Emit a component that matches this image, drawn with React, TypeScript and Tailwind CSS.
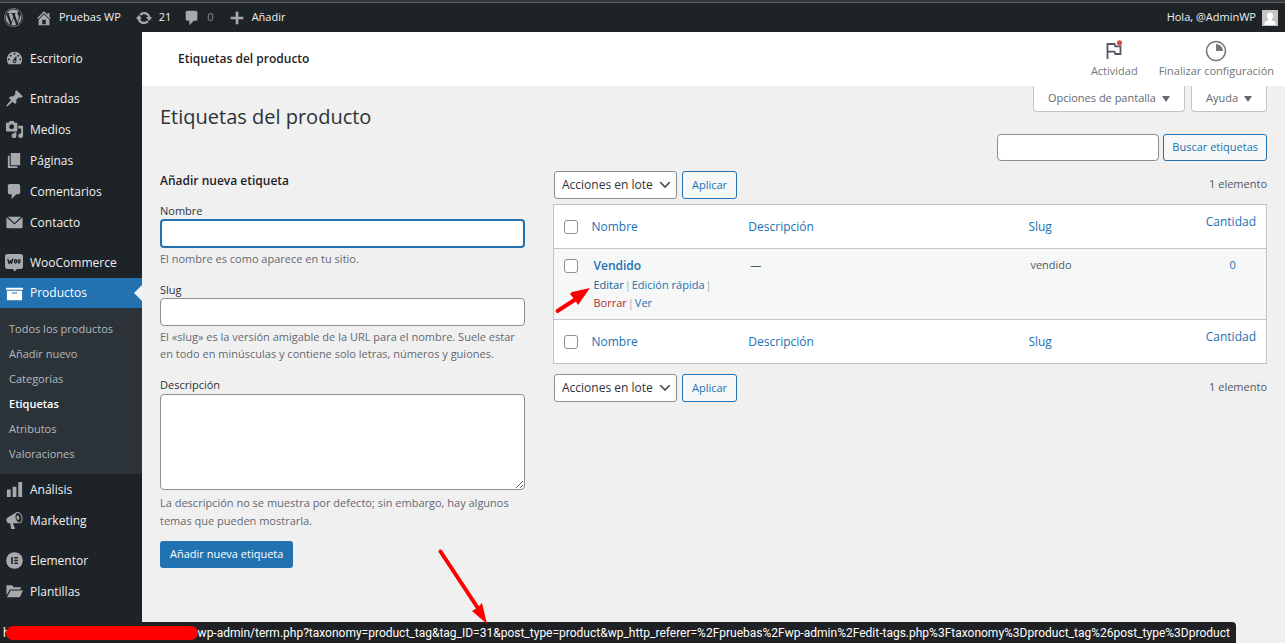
import type { ReactNode } from "react";
import { FaWordpress } from "react-icons/fa";

const ICONS = {
  dashboard:
    "M3.76 16h12.48c1.1-1.37 1.76-3.11 1.76-5 0-4.42-3.58-8-8-8s-8 3.58-8 8c0 1.89.66 3.63 1.76 5zM10 4c.55 0 1 .45 1 1s-.45 1-1 1-1-.45-1-1 .45-1 1-1zM6 6c.55 0 1 .45 1 1s-.45 1-1 1-1-.45-1-1 .45-1 1-1zm8 0c.55 0 1 .45 1 1s-.45 1-1 1-1-.45-1-1 .45-1 1-1zm-5.37 5.55L12 7v6c0 1.1-.9 2-2 2s-2-.9-2-2c0-.57.24-1.08.63-1.45zM4 10c.55 0 1 .45 1 1s-.45 1-1 1-1-.45-1-1 .45-1 1-1zm12 0c.55 0 1 .45 1 1s-.45 1-1 1-1-.45-1-1 .45-1 1-1zm-5 3c0-.55-.45-1-1-1s-1 .45-1 1 .45 1 1 1 1-.45 1-1z",
  pin: "M10.44 3.02l1.82-1.82 6.36 6.35-1.83 1.82c-1.05-.68-2.48-.57-3.41.36l-.75.75c-.92.93-1.04 2.35-.35 3.41l-1.83 1.82-2.41-2.41-2.8 2.79c-.42.42-3.38 2.71-3.8 2.29s1.86-3.39 2.28-3.81l2.79-2.79L4.1 9.36l1.83-1.82c1.05.69 2.48.57 3.4-.36l.75-.75c.93-.92 1.05-2.35.36-3.41z",
  media:
    "M13 11V4c0-.55-.45-1-1-1h-1.67L9 1H5L3.67 3H2c-.55 0-1 .45-1 1v7c0 .55.45 1 1 1h10c.55 0 1-.45 1-1zM7 4.5c1.38 0 2.5 1.12 2.5 2.5S8.38 9.5 7 9.5 4.5 8.38 4.5 7 5.62 4.5 7 4.5zM14 6h5v10.5c0 1.38-1.12 2.5-2.5 2.5S14 17.88 14 16.5s1.12-2.5 2.5-2.5c.17 0 .34.02.5.05V9h-3V6zm-4 8.05V13h2v3.5c0 1.38-1.12 2.5-2.5 2.5S7 17.88 7 16.5 8.12 14 9.5 14c.17 0 .34.02.5.05z",
  page: "M6 15V2h10v13H6zm-1 1h8v2H3V5h2v11z",
  comment:
    "M5 2h9c1.1 0 2 .9 2 2v7c0 1.1-.9 2-2 2h-2l-5 5v-5H5c-1.1 0-2-.9-2-2V4c0-1.1.9-2 2-2z",
  mail: "M3 4L10 10.500 17 4zM1.500 4.600V15c0 .6.500 1 1 1h15c.6 0 1-.4 1-1V4.600L10 12.200z",
  archive: "M19 4v2H1V4h18zM2 7h16v10H2V7zm11 3V9H7v1h6z",
  chart: "M18 18V2h-4v16h4zm-6 0V7H8v11h4zm-6 0v-8H2v8h4z",
  megaphone:
    "M18.15 5.94c.46 1.62.38 3.22-.02 4.48-.42 1.28-1.26 2.18-2.3 2.48-.16.06-.26.06-.4.06-.06.02-.12.02-.18.02-.06.02-.14.02-.22.02h-6.8l2.22 5.5c.02.14-.06.26-.14.34-.08.1-.24.16-.34.16H6.95c-.1 0-.26-.06-.34-.16-.08-.08-.16-.2-.14-.34l-1-5.5H4.25l-.02-.02c-.5.06-1.08-.18-1.54-.62s-.88-1.08-1.06-1.88c-.24-.8-.2-1.56-.02-2.2.18-.62.58-1.08 1.06-1.3l.02-.02 9-5.4c.1-.06.18-.1.24-.16.06-.04.14-.08.24-.12.16-.08.28-.12.5-.18 1.04-.3 2.24.1 3.22.98s1.84 2.24 2.26 3.86zm-2.58 5.98h-.02c.4-.1.74-.34 1.04-.7.58-.7.86-1.76.86-3.04 0-.64-.1-1.3-.28-1.98-.34-1.36-1.02-2.5-1.78-3.24s-1.68-1.1-2.46-.88c-.82.22-1.4.96-1.7 2-.32 1.04-.28 2.36.06 3.72.38 1.36 1 2.5 1.8 3.24.78.74 1.62 1.1 2.48.88zm-2.54-7.08c.22-.04.42-.02.62.04.38.16.76.48 1.02 1s.42 1.2.42 1.78c0 .3-.04.56-.12.8-.18.48-.44.84-.86.94-.34.1-.8-.06-1.14-.4s-.64-.86-.78-1.5c-.18-.62-.12-1.24.02-1.72s.48-.84.82-.94z",
  elementor:
    "M10 1.200a8.800 8.800 0 1 0 0 17.600 8.800 8.800 0 0 0 0-17.600zM6.500 6.400h1.700v7.200H6.500V6.400zm3.200 0h3.900V8H9.700V6.400zm0 2.800h3.900v1.600H9.700V9.200zm0 2.800h3.900v1.600H9.700V12z",
  folder:
    "M1.500 3.500h6l1.500 2h7.500V8H5.200L1.500 14v-10.500zM6 9h13l-3.500 7H2L6 9z",
  update:
    "M10.2 3.28c3.53 0 6.43 2.61 6.92 6h2.08l-3.5 4-3.5-4h2.32c-.45-1.97-2.21-3.45-4.32-3.45-1.45 0-2.73.71-3.54 1.78L4.95 5.66C6.23 4.2 8.11 3.28 10.2 3.28zm-.4 13.44c-3.52 0-6.43-2.61-6.92-6H.8l3.5-4c1.17 1.33 2.33 2.67 3.5 4H5.48c.45 1.97 2.21 3.45 4.32 3.45 1.45 0 2.73-.71 3.54-1.78l1.71 1.95c-1.28 1.46-3.15 2.38-5.25 2.38z",
  plus: "M17 8.500v3h-5.500V17h-3v-5.500H3v-3h5.500V3h3v5.500z",
  home: "M16 8.5l1.53 1.53-1.06 1.06L10 4.6l-6.47 6.49-1.06-1.06L10 2.5l4 4v-2h2v4zm-6-2.46l6 5.99V18H4v-5.97zM12 17v-5H8v5h4z",
};

type IconName = keyof typeof ICONS;

function Icon({ name, className }: { name: IconName; className: string }) {
  return (
    <svg viewBox="0 0 20 20" fill="currentColor" fillRule="evenodd" className={className} aria-hidden="true">
      <path d={ICONS[name]} />
    </svg>
  );
}

function WooIcon() {
  return (
    <svg viewBox="0 0 20 20" className="size-5 shrink-0 text-[#a7aaad]" aria-hidden="true">
      <path d="M3.500 1h13A2.500 2.500 0 0 1 19 3.500v10a2.500 2.500 0 0 1-2.500 2.500H13l-2.500 2.500L9 16H3.500A2.500 2.500 0 0 1 1 13.500v-10A2.500 2.500 0 0 1 3.500 1z" fill="currentColor" />
      <g fill="none" stroke="#1d2327" strokeWidth="1.300" strokeLinejoin="round" strokeLinecap="round">
        <path d="M4 6.500l1 4 1.600-3 .9 3L8.800 6" />
        <ellipse cx="11.500" cy="8.300" rx="1" ry="1.700" />
        <ellipse cx="15" cy="8.300" rx="1" ry="1.700" />
      </g>
    </svg>
  );
}

function MenuItem({ icon, label }: { icon: IconName; label: string }) {
  return (
    <li>
      <a href="#" className="flex h-[31px] items-center gap-1.5 pl-1 text-[12px] text-[#f0f0f1]">
        <span className="flex w-5 justify-center text-[#a7aaad]">
          <Icon name={icon} className="size-[19px]" />
        </span>
        {label}
      </a>
    </li>
  );
}

const SUBMENU = ["Todos los productos", "Añadir nuevo", "Categorías", "Etiquetas", "Atributos", "Valoraciones"];

function Sidebar() {
  return (
    <nav className="w-[142px] shrink-0 bg-[#1d2327] pt-[11px]">
      <ul>
        <MenuItem icon="dashboard" label="Escritorio" />
      </ul>
      <ul className="mt-[9px]">
        <MenuItem icon="pin" label="Entradas" />
        <MenuItem icon="media" label="Medios" />
        <MenuItem icon="page" label="Páginas" />
        <MenuItem icon="comment" label="Comentarios" />
        <MenuItem icon="mail" label="Contacto" />
      </ul>
      <ul className="mt-[9px]">
        <li>
          <a href="#" className="flex h-[31px] items-center gap-1.5 pl-1 text-[12px] text-[#f0f0f1]">
            <WooIcon />
            WooCommerce
          </a>
        </li>
        <li>
          <a href="#" className="relative flex h-[30px] items-center gap-1.5 bg-[#2271b1] pl-1 text-[12px] text-white">
            <span className="flex w-5 justify-center">
              <Icon name="archive" className="size-[19px]" />
            </span>
            Productos
            <span className="absolute right-0 top-[7px] border-y-8 border-r-8 border-y-transparent border-r-[#f0f0f1]" />
          </a>
          <ul className="bg-[#2c3338] pb-[7px] pt-[9px]">
            {SUBMENU.map((label) => (
              <li key={label}>
                <a
                  href="#"
                  className={`flex h-[25px] items-center pl-[9px] text-[11px] ${
                    label === "Etiquetas" ? "font-semibold text-white" : "text-[#b4b9be]"
                  }`}
                >
                  {label}
                </a>
              </li>
            ))}
          </ul>
        </li>
        <MenuItem icon="chart" label="Análisis" />
        <MenuItem icon="megaphone" label="Marketing" />
      </ul>
      <ul className="mt-[9px]">
        <MenuItem icon="elementor" label="Elementor" />
        <MenuItem icon="folder" label="Plantillas" />
      </ul>
    </nav>
  );
}

function AdminBar() {
  return (
    <div className="border-t-2 border-[#35363a]">
      <header className="flex h-[30px] items-center border-t border-[#5f6368] bg-[#1d2327] pl-1 pr-[7px] text-[11px] text-[#f0f0f1]">
        <a href="#" aria-label="Acerca de WordPress" className="text-[#a7aaad]">
          <FaWordpress className="size-[19px]" />
        </a>
        <a href="#" className="ml-3 flex items-center gap-1.5">
          <Icon name="home" className="size-[18px] text-[#a7aaad]" />
          Pruebas WP
        </a>
        <a href="#" className="ml-3.5 flex items-center gap-1.5">
          <Icon name="update" className="size-[18px] text-[#a7aaad]" />
          21
        </a>
        <a href="#" className="ml-3 flex items-center gap-1.5 text-[#8c8f94]">
          <Icon name="comment" className="size-[18px] text-[#a7aaad]" />
          0
        </a>
        <a href="#" className="ml-3.5 flex items-center gap-1.5">
          <Icon name="plus" className="size-[18px] text-[#a7aaad]" />
          Añadir
        </a>
        <a href="#" className="ml-auto flex items-center gap-1.5">
          Hola, @AdminWP
          <svg viewBox="0 0 16 16" className="size-4" aria-hidden="true">
            <rect width="16" height="16" fill="#c5c5c5" />
            <path d="M8 2.500c2 0 3 1.500 3 3.500 0 1.500-.6 2.800-1.500 3.400v.8c2 .5 4 1.300 4 3.300V15h-11v-1.500c0-2 2-2.800 4-3.300v-.8C5.600 8.800 5 7.500 5 6c0-2 1-3.500 3-3.500z" fill="#fff" />
          </svg>
        </a>
      </header>
    </div>
  );
}

function WooHeader() {
  return (
    <div className="flex h-[54px] items-center bg-white pl-9 pr-[11px]">
      <h2 className="text-[12px] font-semibold text-[#1e1e1e]">Etiquetas del producto</h2>
      <div className="ml-auto flex gap-[21px] text-[11px] leading-4 text-[#757575]">
        <button type="button" className="flex flex-col items-center">
          <svg viewBox="0 0 24 24" className="size-6" aria-hidden="true">
            <path d="M5.500 20V5h7l.8 2.300h5.200v7.700h-5.200l-.8-2.300H5.500" fill="none" stroke="#50575e" strokeWidth="1.800" />
            <circle cx="17.500" cy="3.800" r="2.600" fill="#e0484d" />
          </svg>
          Actividad
        </button>
        <button type="button" className="flex flex-col items-center">
          <svg viewBox="0 0 24 24" className="size-6" aria-hidden="true">
            <circle cx="12" cy="12" r="9.500" fill="none" stroke="#757575" strokeWidth="1.600" />
            <path d="M12 5a7 7 0 0 1 7 7h-7z" fill="#757575" />
          </svg>
          Finalizar configuración
        </button>
      </div>
    </div>
  );
}

function ScreenTab({ children }: { children: ReactNode }) {
  return (
    <button
      type="button"
      className="flex h-[26px] items-center gap-1.5 rounded-b border border-t-0 border-[#c3c4c7] bg-white px-3.5 text-[11px] text-[#646970]"
    >
      {children}
      <svg viewBox="0 0 8 6" className="h-1.5 w-2" aria-hidden="true">
        <path d="M0 0h8L4 6z" fill="#646970" />
      </svg>
    </button>
  );
}

function TagForm() {
  return (
    <form className="pr-7 text-[11px] text-[#2c3338]">
      <h2 className="text-[12px] font-semibold leading-5 text-[#1d2327]">Añadir nueva etiqueta</h2>
      <div className="mt-[11px]">
        <label htmlFor="tag-name" className="block leading-[17px]">
          Nombre
        </label>
        <input id="tag-name" className="block h-[29px] w-full rounded border-2 border-[#2271b1] bg-white px-2 outline-none" />
        <p className="mt-0.5 leading-[17px] text-[#646970]">El nombre es como aparece en tu sitio.</p>
      </div>
      <div className="mt-[14px]">
        <label htmlFor="tag-slug" className="block leading-[17px]">
          Slug
        </label>
        <input id="tag-slug" className="block h-7 w-full rounded border border-[#8c8f94] bg-white px-2" />
        <p className="mt-0.5 leading-[17px] text-[#646970]">
          El «slug» es la versión amigable de la URL para el nombre. Suele estar en todo en minúsculas y contiene
          solo letras, números y guiones.
        </p>
      </div>
      <div className="mt-[14px]">
        <label htmlFor="tag-description" className="block leading-[18px]">
          Descripción
        </label>
        <textarea id="tag-description" className="block h-24 w-full rounded border border-[#8c8f94] bg-white px-2" />
        <p className="mt-1 leading-[18px] text-[#646970]">
          La descripción no se muestra por defecto; sin embargo, hay algunos temas que pueden mostrarla.
        </p>
      </div>
      <button type="button" className="mt-[11px] h-[27px] rounded-[3px] bg-[#2271b1] px-2.5 font-medium text-white">
        Añadir nueva etiqueta
      </button>
    </form>
  );
}

function BulkActions() {
  return (
    <div className="flex items-start pl-px">
      <div className="relative">
        <select
          aria-label="Selecciona acción en lote"
          className="block h-7 w-[123px] appearance-none rounded-[3px] border border-[#8c8f94] bg-white pl-[7px] text-[12px] text-[#2c3338]"
        >
          <option>Acciones en lote</option>
        </select>
        <svg viewBox="0 0 20 20" className="pointer-events-none absolute right-1 top-1.5 size-4" aria-hidden="true">
          <path d="M5 6l5 5 5-5 2 1-7 7-7-7 2-1z" fill="#50575e" />
        </svg>
      </div>
      <button type="button" className="ml-[5px] h-7 rounded-[3px] border border-[#2271b1] bg-[#f6f7f7] px-[9px] text-[11px] text-[#2271b1]">
        Aplicar
      </button>
      <span className="ml-auto pt-1 text-[11px] leading-[18px] text-[#50575e]">1 elemento</span>
    </div>
  );
}

function HeadingRow({ edge }: { edge: string }) {
  return (
    <tr className={`h-11 bg-white text-left text-[12px] text-[#2271b1] ${edge}`}>
      <td className="pl-[10px]">
        <input type="checkbox" aria-label="Seleccionar todo" className="block size-3.5 appearance-none rounded-[3px] border border-[#8c8f94] bg-white" />
      </td>
      <th className="pl-2 font-normal"><a href="#">Nombre</a></th>
      <th className="pl-2 font-normal"><a href="#">Descripción</a></th>
      <th className="pl-2 font-normal"><a href="#">Slug</a></th>
      <th className="pr-2.5 pt-2 text-right align-top font-normal leading-[18px]"><a href="#">Cantidad</a></th>
    </tr>
  );
}

function Divider() {
  return <span className="px-px text-[#a7aaad]">|</span>;
}

function TagTable() {
  return (
    <table className="w-full table-fixed border-collapse border border-[#c3c4c7]">
      <colgroup>
        <col className="w-[30px]" />
        <col className="w-[22%]" />
        <col />
        <col className="w-[24%]" />
        <col className="w-[75px]" />
      </colgroup>
      <thead>
        <HeadingRow edge="border-b border-[#c3c4c7]" />
      </thead>
      <tbody>
        <tr className="h-[71px] bg-[#f6f7f7] align-top text-[11px] leading-[18px] text-[#50575e]">
          <td className="pl-[10px] pt-[10px]">
            <input type="checkbox" aria-label="Seleccionar Vendido" className="block size-3.5 appearance-none rounded-[3px] border border-[#8c8f94] bg-white" />
          </td>
          <td className="pl-[10px] pt-2">
            <a href="#" className="block text-[12px] font-semibold text-[#2271b1]">
              Vendido
            </a>
            <div className="pt-px">
              <a href="#" className="text-[#135e96]">Editar</a>
              <Divider />
              <a href="#" className="text-[#2271b1]">Edición rápida</a>
              <Divider />
              <br />
              <a href="#" className="text-[#b32d2e]">Borrar</a>
              <Divider />
              <a href="#" className="text-[#2271b1]">Ver</a>
            </div>
          </td>
          <td className="pl-[10px] pt-[7px]">—</td>
          <td className="pl-[10px] pt-[7px]">vendido</td>
          <td className="pl-2 pt-[7px] text-center">
            <a href="#" className="text-[#2271b1]">0</a>
          </td>
        </tr>
      </tbody>
      <tfoot>
        <HeadingRow edge="border-t border-[#c3c4c7]" />
      </tfoot>
    </table>
  );
}

function StatusBar() {
  return (
    <div className="absolute bottom-0 left-0 flex h-[21px] items-center rounded-tr bg-[#202124] pl-[3px] pr-1.5 font-[Roboto,sans-serif] text-[12px] text-white">
      <span>h</span>
      <span className="-ml-1 h-3.5 w-[192px] rounded-full bg-[#ff0000]" />
      <span className="whitespace-nowrap">
        wp-admin/term.php?taxonomy=product_tag&amp;tag_ID=31&amp;post_type=product&amp;wp_http_referer=%2Fpruebas%2Fwp-admin%2Fedit-tags.php%3Ftaxonomy%3Dproduct_tag%26post_type%3Dproduct
      </span>
    </div>
  );
}

export default function App() {
  return (
    <div className="relative flex min-h-screen flex-col overflow-hidden bg-[#f0f0f1] font-['Open_Sans',sans-serif]">
      <AdminBar />
      <div className="flex flex-1">
        <Sidebar />
        <div className="min-w-0 flex-1">
          <WooHeader />
          <main className="px-[18px]">
            <div className="flex items-start justify-between">
              <h1 className="pb-px pt-[15px] text-[20px] leading-8 text-[#2c3338]">Etiquetas del producto</h1>
              <div className="flex gap-1.5">
                <ScreenTab>Opciones de pantalla</ScreenTab>
                <ScreenTab>Ayuda</ScreenTab>
              </div>
            </div>
            <form className="flex justify-end gap-1">
              <input
                type="search"
                aria-label="Buscar etiquetas"
                className="h-[27px] w-[162px] rounded border border-[#8c8f94] bg-white px-2 text-[11px]"
              />
              <button type="button" className="h-[27px] rounded-[3px] border border-[#2271b1] bg-[#f6f7f7] px-2 text-[11px] text-[#2271b1]">
                Buscar etiquetas
              </button>
            </form>
            <div className="flex pt-[10px]">
              <div className="w-[35.5%] shrink-0">
                <TagForm />
              </div>
              <div className="min-w-0 flex-1">
                <BulkActions />
                <div className="py-[5px]">
                  <TagTable />
                </div>
                <div className="pt-[5px]">
                  <BulkActions />
                </div>
              </div>
            </div>
          </main>
        </div>
      </div>
      <StatusBar />
      {/* red callout arrows */}
      <svg viewBox="0 0 1285 643" className="pointer-events-none absolute left-0 top-0 h-[643px] w-[1285px]" aria-hidden="true">
        <g stroke="#ff0000" strokeWidth="4" strokeLinecap="round" fill="#ff0000">
          <path d="M557.500 311l20-13" />
          <path d="M590 288l-12 17-3-5-5-6 2-2z" stroke="none" />
          <path d="M440.500 551.500l37 56" />
          <path d="M487 624l-15-13 5-3 5-5z" stroke="none" />
        </g>
      </svg>
    </div>
  );
}
